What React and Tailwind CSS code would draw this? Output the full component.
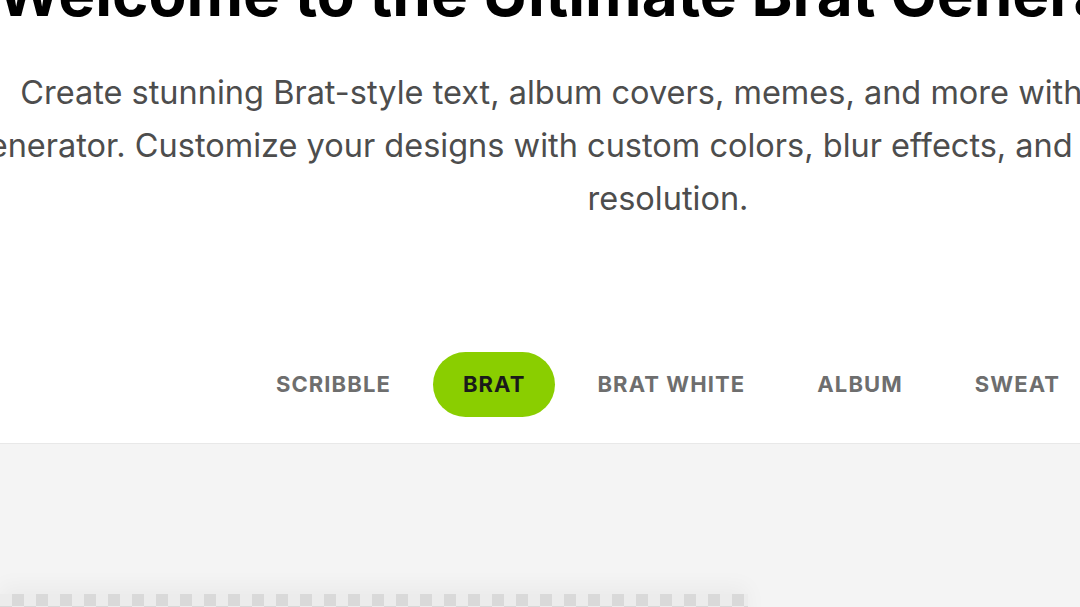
import React, { useState } from "react";

const tabs = ["Scribble", "Brat", "Brat White", "Album", "Sweat"];

const App = () => {
  const [activeTab, setActiveTab] = useState("Brat");

  return (
    <div className="w-full h-[607px] overflow-hidden bg-white font-['Inter',sans-serif]">
      <div className="w-[1336px]">
        {/* Hero */}
        <div className="flex flex-col items-center text-center">
          <h1 className="-mt-[37px] text-[62px] leading-[62px] font-bold text-black whitespace-nowrap">
            Welcome to the Ultimate Brat Generator Tool
          </h1>
          <p className="mt-[41px] w-[1440px] text-[32.5px] leading-[53px] text-[#4d4d4d] whitespace-nowrap">
            Create stunning Brat-style text, album covers, memes, and more with our online Brat
            <br />
            Generator. Customize your designs with custom colors, blur effects, and download it in high
            <br />
            resolution.
          </p>
        </div>

        {/* Tabs */}
        <div className="mt-[127px] flex justify-center gap-[12px] pb-[26px] border-b border-[#e8e8e8]">
          {tabs.map((tab) => (
            <button
              key={tab}
              onClick={() => setActiveTab(tab)}
              className={`h-[65px] px-[30px] rounded-full text-[22px] font-bold uppercase tracking-[0.05em] ${
                activeTab === tab
                  ? "bg-[#8ace00] text-[#1a1a1a]"
                  : "text-[#6e6e6e] hover:text-black"
              }`}
            >
              {tab}
            </button>
          ))}
        </div>

        {/* Editor area */}
        <div className="bg-[#f4f4f4] h-[300px] pt-[150px]">
          <div className="w-[748px] h-[200px] bg-[conic-gradient(#d9d9d9_25%,#ececec_0_50%,#d9d9d9_0_75%,#ececec_0)] bg-[length:24px_24px] shadow-[0_-8px_20px_rgba(0,0,0,0.04)]"></div>
        </div>
      </div>
    </div>
  );
};

export default App;
